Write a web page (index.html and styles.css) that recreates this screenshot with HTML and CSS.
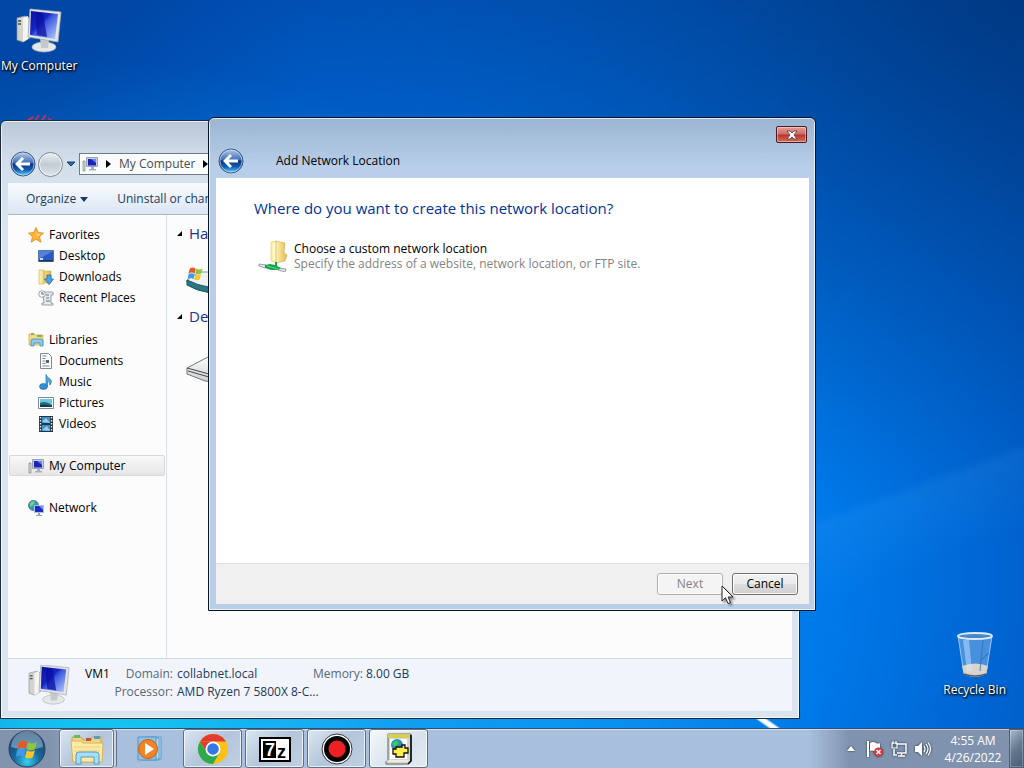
FILE: index.html
```html
<!DOCTYPE html>
<html lang="en">
<head>
    <meta charset="UTF-8">
    <meta name="viewport" content="width=device-width, initial-scale=1.0">
    <title>Add Network Location</title>
    <link rel="stylesheet" href="styles.css">
</head>
<body>
    <!-- Shared gradients and icons -->
    <svg class="defs" aria-hidden="true">
        <defs>
            <linearGradient id="screen" x1="0" y1="0" x2="1" y2="1">
                <stop offset="0" stop-color="#0a10a0"/>
                <stop offset=".4" stop-color="#1526c8"/>
                <stop offset=".5" stop-color="#3f5ce0"/>
                <stop offset="1" stop-color="#b9d0ff"/>
            </linearGradient>
            <linearGradient id="orb" x1="0" y1="0" x2="0" y2="1">
                <stop offset="0" stop-color="#b8cdea"/>
                <stop offset=".45" stop-color="#3f6fb8"/>
                <stop offset=".5" stop-color="#0d3180"/>
                <stop offset=".75" stop-color="#1260b8"/>
                <stop offset="1" stop-color="#5fe0ff"/>
            </linearGradient>
            <linearGradient id="folder" x1="0" y1="0" x2="1" y2="0">
                <stop offset="0" stop-color="#fdf3b4"/>
                <stop offset="1" stop-color="#e0b94e"/>
            </linearGradient>
            <radialGradient id="startOrb" cx=".5" cy=".85" r=".8">
                <stop offset="0" stop-color="#38d0f0"/>
                <stop offset=".45" stop-color="#16699c"/>
                <stop offset="1" stop-color="#1c3f66"/>
            </radialGradient>
            <linearGradient id="drive" x1="0" y1="0" x2="0" y2="1">
                <stop offset="0" stop-color="#ffffff"/>
                <stop offset="1" stop-color="#c9cdcf"/>
            </linearGradient>
        </defs>
        <symbol id="computer" viewBox="0 0 48 44">
            <path d="M2 9 10 7l5 2v20l-7 4-6-2z" fill="#d3d3cf" stroke="#8d9294" stroke-width=".7"/>
            <path d="m8 9 5-2v23l-5 3z" fill="#f4f4f2"/>
            <path d="M3 12h3M3 15h3" stroke="#4b4f52" stroke-width="1.300"/>
            <ellipse cx="29" cy="38" rx="12" ry="5" fill="#e6e8e8" stroke="#aab0b2" stroke-width=".7"/>
            <path d="m25 29 9 2-1 8h-7z" fill="#c4c9cc"/>
            <path d="m15 0 31 3-3 30-30-5z" fill="#e3e5e2" stroke="#a2a9ac" stroke-width=".8"/>
            <path d="m16 2 27 3-3 25-25-4z" fill="url(#screen)"/>
            <path d="m20 3 8 1 4 24-10-2z" fill="#0a0d9c" opacity=".7"/>
        </symbol>
        <symbol id="computer-small" viewBox="0 0 16 16">
            <path d="M1 5h2v10H1z" fill="#d8ddcf" stroke="#7e8679" stroke-width=".7"/>
            <path d="M4.500 1.500h11v9h-11z" fill="#c7cede" stroke="#97a1b8"/>
            <path d="M6 3h8v6.500H6z" fill="#1a22b8"/>
            <path d="M9 3h5v4z" fill="#6a83ee"/>
            <path d="M9 11h3v2h2v1.500H7V13h2z" fill="#a9b1bd"/>
        </symbol>
        <symbol id="back" viewBox="0 0 26 26">
            <circle cx="13" cy="13" r="12" fill="url(#orb)" stroke="#3d5274"/>
            <circle cx="13" cy="13" r="11" fill="none" stroke="#cfe2f6" stroke-width=".8" opacity=".8"/>
            <path d="m5 13 7-7 2 2-3.500 3.500H20v3h-9.500L14 18l-2 2z" fill="#fff"/>
        </symbol>
        <symbol id="winflag" viewBox="0 0 24 24">
            <path d="M4 5q4-3 8 0l-1 7q-4-3-9 0z" fill="#e8572a"/>
            <path d="M13 5q4 3 9 0l-2 7q-4 3-8 0z" fill="#8fc63d"/>
            <path d="M2 13q4-3 9 0l-2 7q-4-3-8 0z" fill="#3f9be8"/>
            <path d="M12 13q4 3 8 0l-2 7q-4 3-8 0z" fill="#fbc52c"/>
        </symbol>
    </svg>

    <div class="screen">
        <main class="desktop">
            <a class="shortcut shortcut-computer" href="#">
                <svg class="shortcut-icon"><use href="#computer"/></svg>
                <span>My Computer</span>
            </a>

            <svg class="hidden-shortcut" viewBox="0 0 32 12" aria-hidden="true">
                <path d="m4 7 6-3M11 8l4-6M17 8l5-6M24 5l4 3" stroke="#a83a64" stroke-width="2"/>
            </svg>

            <a class="shortcut shortcut-bin" href="#">
                <svg class="shortcut-icon" viewBox="0 0 48 48">
                    <path d="m7 5 6 38q11 5 22 0l6-38z" fill="#7fb2e8" fill-opacity=".55" stroke="#b9d6f2" stroke-opacity=".8"/>
                    <path d="m11 35 2 8q11 5 22 0l2-8q-12-5-26 0z" fill="#d9d5cd"/>
                    <path d="M12 9h6l3 31h-5z" fill="#d7ecff" opacity=".45"/>
                    <path d="m32 9-3 31M38 22l-9 8" stroke="#346fb0" stroke-width="1.200" opacity=".7"/>
                    <path d="M13 43q11 4 22 0" fill="none" stroke="#5a5d66" stroke-width="1.500"/>
                    <ellipse cx="24" cy="5" rx="17" ry="3" fill="#4a86c8" stroke="#dcecf6" stroke-width="1.800"/>
                </svg>
                <span>Recycle Bin</span>
            </a>

            <section class="window explorer">
                <div class="explorer-title"></div>
                <nav class="explorer-nav">
                    <button class="round-btn" aria-label="Back"><svg><use href="#back"/></svg></button>
                    <button class="round-btn forward" aria-label="Forward"></button>
                    <button class="history-btn" aria-label="Recent pages">
                        <svg viewBox="0 0 10 6"><path d="M1 1h8L5 5z" fill="#2c6fb5" stroke="#1d3f6b"/></svg>
                    </button>
                    <div class="address">
                        <svg class="icon16"><use href="#computer-small"/></svg>
                        <svg class="crumb-arrow" viewBox="0 0 5 8"><path d="m0 0 5 4-5 4z"/></svg>
                        <a href="#">My Computer</a>
                        <svg class="crumb-arrow" viewBox="0 0 5 8"><path d="m0 0 5 4-5 4z"/></svg>
                    </div>
                </nav>
                <div class="toolbar">
                    <button>Organize <svg viewBox="0 0 8 5"><path d="M0 0h8L4 5z"/></svg></button>
                    <button>Uninstall or change</button>
                </div>

                <div class="explorer-body">
                    <aside class="sidebar">
                        <ul class="tree">
                            <li><a href="#">
                                <svg class="icon16" viewBox="0 0 16 16"><path d="m8 .5 2.300 5 5.200.6-3.900 3.600 1.200 5.500L8 12.300l-4.800 2.900 1.200-5.500L.5 6.100l5.200-.6z" fill="#fbb43a" stroke="#e38a1c" stroke-width=".8"/><path d="m8 3 1 4 4 0-4 2z" fill="#ffe48a"/></svg>
                                Favorites</a></li>
                            <li class="child"><a href="#">
                                <svg class="icon16" viewBox="0 0 16 16"><path d="M.5 2.500h15v11H.5z" fill="#2b58c0" stroke="#56779f"/><path d="M1 3h14L1 11z" fill="#6f9df0" opacity=".6"/><path d="M1 12h14v1.500H1z" fill="#1d3568"/><path d="M2 10h3v2H2z" fill="#c9dcf5"/></svg>
                                Desktop</a></li>
                            <li class="child"><a href="#">
                                <svg class="icon16" viewBox="0 0 16 16"><path d="M1 1h5v14H1zM6 2h7v12H6z" fill="url(#folder)" stroke="#d3ac4c" stroke-width=".6"/><path d="M9 6h4v4h2.500L11 15.500 6.500 10H9z" fill="#4ba4e6" stroke="#1e66a8" stroke-width=".8"/></svg>
                                Downloads</a></li>
                            <li class="child"><a href="#">
                                <svg class="icon16" viewBox="0 0 16 16"><path d="M5 2h9q2 0 1 3h-2v8q3 0 2 2H5q-2 0-1-2h2z" fill="#e7ebed" stroke="#7f898f" stroke-width=".8"/><circle cx="4" cy="4" r="3.300" fill="#f5f8fa" stroke="#8a949a" stroke-width=".8"/><path d="M4 2v2h2M8 5h3M8 8h3M8 11h4" fill="none" stroke="#6b757b" stroke-width="1.200"/></svg>
                                Recent Places</a></li>
                        </ul>
                        <ul class="tree">
                            <li><a href="#">
                                <svg class="icon16" viewBox="0 0 16 16"><path d="M1 2h5l1 1h8v10H1z" fill="#f5dc82" stroke="#cfae52" stroke-width=".8"/><path d="M3 2h3M9 4h5" stroke="#5ca45c" stroke-width="1.500"/><path d="M3 14V9q0-2 2-2h8q2 0 2 2v5h-3v-3H6v3z" fill="#8ccbee" stroke="#4390bd" stroke-width=".8"/></svg>
                                Libraries</a></li>
                            <li class="child"><a href="#">
                                <svg class="icon16" viewBox="0 0 16 16"><path d="M2.500.5h8l3 3v12h-11z" fill="#fbfcfd" stroke="#818a91"/><path d="M4.500 3h4M4.500 5.500h3M4.500 8h3M4.500 10.500h3M4.500 13h7" stroke="#7e8790"/><path d="M8 7h3v3H8z" fill="#59636e"/></svg>
                                Documents</a></li>
                            <li class="child"><a href="#">
                                <svg class="icon16" viewBox="0 0 16 16"><ellipse cx="5.500" cy="12.500" rx="4" ry="3" fill="#2f93d8" stroke="#1c639d" stroke-width=".6"/><path d="M8 12V.500q1 3 4 4.500 3 2 0 6 0-3-2.500-4v5z" fill="#4badea" stroke="#1c639d" stroke-width=".6"/></svg>
                                Music</a></li>
                            <li class="child"><a href="#">
                                <svg class="icon16" viewBox="0 0 16 16"><path d="M.5 2.500h15v11H.5z" fill="#fff" stroke="#7d8b94"/><path d="M2 4h12v8H2z" fill="#6ec3e8"/><path d="M2 8q5-3 12 2v2H2z" fill="#226f6e"/><path d="M2 10q6-1 12 1v1H2z" fill="#12395c"/></svg>
                                Pictures</a></li>
                            <li class="child"><a href="#">
                                <svg class="icon16" viewBox="0 0 16 16"><path d="M1 0h14v16H1z" fill="#27333d"/><path d="M4 1h8v6H4zM4 9h8v6H4z" fill="#3f92cf"/><path d="m4 6 4-4 4 5zM4 14l5-4 3 5z" fill="#8fd0ee"/><path d="M2.500 1v14M13.500 1v14" stroke="#e6eef3" stroke-width="1.400" stroke-dasharray="1.500 1.500"/></svg>
                                Videos</a></li>
                        </ul>
                        <ul class="tree">
                            <li class="selected"><a href="#"><svg class="icon16"><use href="#computer-small"/></svg>My Computer</a></li>
                        </ul>
                        <ul class="tree">
                            <li><a href="#">
                                <svg class="icon16" viewBox="0 0 16 16"><circle cx="5.500" cy="5.500" r="5" fill="#2e9bd0" stroke="#24659a" stroke-width=".7"/><path d="M2 3q3-3 5-1L5 5 2 7zM6 7l3-1-1 4z" fill="#7fd06a"/><path d="M6.500 5.500h9v7h-9z" fill="#1c2cc0" stroke="#b6c0d4"/><path d="m11 6 4 0v4z" fill="#7b90f0"/><path d="M10 13h2v2h2v1H8v-1h2z" fill="#99a3b2"/></svg>
                                Network</a></li>
                        </ul>
                    </aside>
                    <div class="files">
                        <h2><svg viewBox="0 0 7 7"><path d="M6 1v5H1z"/></svg>Hard Disk Drives</h2>
                        <div class="drive">
                            <svg viewBox="0 0 48 36">
                                <path d="m1 19 12-8h28l6 8v7q-22 8-46-4z" fill="#eef2f2" stroke="#8b9799"/>
                                <path d="M1 19q22 11 46 7v4q-26 6-46-6z" fill="#2c7583" stroke="#1c5560"/>
                                <svg x="1" y="4" width="17" height="17"><use href="#winflag"/></svg>
                            </svg>
                        </div>
                        <h2><svg viewBox="0 0 7 7"><path d="M6 1v5H1z"/></svg>Devices with Removable Storage</h2>
                        <div class="drive">
                            <svg viewBox="0 0 48 36">
                                <path d="m1 17 21-11h20l5 9v12q-14 6-28 3L1 23z" fill="url(#drive)" stroke="#74797b"/>
                                <path d="m1 17 22 6 24-5M2 20l21 6 24-5" fill="none" stroke="#4c5254" stroke-width="1.200"/>
                            </svg>
                        </div>
                    </div>
                </div>

                <footer class="details">
                    <svg class="details-icon"><use href="#computer"/></svg>
                    <strong>VM1</strong>
                    <dl>
                        <dt>Domain:</dt><dd>collabnet.local</dd>
                        <dt>Processor:</dt><dd>AMD Ryzen 7 5800X 8-C...</dd>
                    </dl>
                    <dl>
                        <dt>Memory:</dt><dd>8.00 GB</dd>
                    </dl>
                </footer>
            </section>

            <section class="window dialog" role="dialog" aria-labelledby="dialog-title">
                <header class="dialog-caption">
                    <button class="close-btn" aria-label="Close">
                        <svg viewBox="0 0 12 10"><path d="M1 1h3l2 2 2-2h3L8 5l3 4H8L6 7 4 9H1l3-4z" fill="#fff" stroke="#5c3238" stroke-width=".8"/></svg>
                    </button>
                </header>
                <div class="dialog-title">
                    <button class="round-btn" aria-label="Back"><svg><use href="#back"/></svg></button>
                    <span id="dialog-title">Add Network Location</span>
                </div>
                <div class="dialog-content">
                    <h1>Where do you want to create this network location?</h1>
                    <a class="choice" href="#">
                        <svg viewBox="0 0 32 32">
                            <path d="m13 2 6-1v22l-6-2z" fill="#fff1a6" stroke="#e2c462" stroke-width=".6"/>
                            <path d="m18 1 9 2-1 10 3 2-2 6-9 2z" fill="url(#folder)" stroke="#d1ab4b" stroke-width=".6"/>
                            <path d="m15 4 2-1v17l-2-1z" fill="#fffbd8"/>
                            <path d="m1 24 7 1-1 3-6-2zM20 28l8 1-1 3-7-2z" fill="#dfe5e8" stroke="#859195" stroke-width=".8"/>
                            <path d="m7 25 5-1 5 1v-3h2v4l4 2-3 2h-7l-6-2z" fill="#16a34a"/>
                            <path d="m9 26 11 3" stroke="#5fd486" stroke-width="1.200"/>
                        </svg>
                        <span class="choice-text">
                            <span>Choose a custom network location</span>
                            <small>Specify the address of a website, network location, or FTP site.</small>
                        </span>
                    </a>
                </div>
                <footer class="dialog-footer">
                    <button class="btn" disabled>Next</button>
                    <button class="btn">Cancel</button>
                    <svg class="cursor" viewBox="0 0 13 20"><path d="M1 1v15l3.500-3.300L7 18.500l2.500-1-2.400-5.500H12z" fill="#fff" stroke="#222"/></svg>
                </footer>
            </section>
        </main>

        <footer class="taskbar">
            <button class="start" aria-label="Start">
                <svg viewBox="0 0 38 38">
                    <circle cx="19" cy="19" r="18" fill="url(#startOrb)" stroke="#273f5c"/>
                    <path d="M3 17a16 16 0 0 1 32 0q-16 5-32 0z" fill="#d8eaf8" opacity=".4"/>
                    <svg x="7" y="7" width="24" height="24"><use href="#winflag"/></svg>
                </svg>
            </button>
            <button class="task stacked" aria-label="Windows Explorer">
                <svg viewBox="0 0 34 34">
                    <path d="M2 5h9l2 3h8l1-3h9v25H3z" fill="#f2d77e" stroke="#c9a551"/>
                    <path d="M4 3h6v3H4z" fill="#6cb66c"/><path d="M16 6h5v3h-5z" fill="#c9543d"/><path d="M24 4h6v3h-6z" fill="#5a9cc9"/>
                    <path d="M1 9h10l2 2h20l-1 19H3z" fill="#fbe9a4" stroke="#d6b461"/>
                    <path d="M4 15h26M4 19h26" stroke="#ecd27c"/>
                    <path d="M6 32v-9q0-3 3-3h17q3 0 3 3v9h-5v-7H11v7z" fill="#a9dcf2" stroke="#4d9fc7"/>
                </svg>
            </button>
            <button class="task idle" aria-label="Windows Media Player">
                <svg viewBox="0 0 34 34">
                    <path d="M13 5h16v22H13zM10 6h17v22H10z" fill="#b6dbf2" stroke="#5a9dc9"/>
                    <path d="M6 5h18v23H6z" fill="#8cc2e7" stroke="#5795c3"/>
                    <circle cx="16" cy="17" r="9.500" fill="#f08427" stroke="#d05d14"/>
                    <path d="m13 11 9 6-9 6z" fill="#fff"/>
                </svg>
            </button>
            <button class="task" aria-label="Google Chrome">
                <svg viewBox="0 0 34 34">
                    <circle cx="17" cy="17" r="15" fill="#fbc116"/>
                    <path d="M4 9.500A15 15 0 0 1 30 9.500H17z" fill="#e33b2e"/>
                    <path d="M4 9.500 17 9.500 11 21z" fill="#e33b2e"/>
                    <path d="M4 9.500A15 15 0 0 0 17 32l6.500-11.300-12.500.300z" fill="#2da94f"/>
                    <circle cx="17" cy="17" r="7.500" fill="#fff"/>
                    <circle cx="17" cy="17" r="5.800" fill="#3478e5"/>
                </svg>
            </button>
            <button class="task" aria-label="7-Zip">
                <svg viewBox="0 0 34 34">
                    <path d="M2 6h30v23H2z" fill="#fff" stroke="#000" stroke-width="2"/>
                    <path d="M5 9h13v17H5z"/>
                    <text class="zip-text" x="7" y="24" fill="#fff">7</text>
                    <text class="zip-text" x="19" y="26">z</text>
                </svg>
            </button>
            <button class="task" aria-label="Screen recorder">
                <svg viewBox="0 0 34 34">
                    <circle cx="17" cy="17" r="15" fill="#fff" stroke="#333"/>
                    <circle cx="17" cy="17" r="13"/>
                    <circle cx="17" cy="17" r="8.500" fill="#ee2024"/>
                </svg>
            </button>
            <button class="task active" aria-label="Setup">
                <svg viewBox="0 0 34 34">
                    <path d="M6 2h23v27l-3 3H4v-3h2z" fill="#d6d6ce" stroke="#67675f"/>
                    <path d="M29 3v26l-3 3" fill="none" stroke="#000" stroke-width="1.500"/>
                    <path d="M6 2h22v4H6z" fill="#d4cf5c"/>
                    <path d="M8 7h17v20H8z" fill="#fff"/>
                    <circle cx="15" cy="13" r="6" fill="#278fb0"/>
                    <path d="m10 12 4-4 3 3-4 4z" fill="#42c660"/>
                    <path d="M11 17h3v-2h6v-2h3v3h3v5h-4v4h-8v-3h-3z" fill="#fff04e" stroke="#111" stroke-width="1.300"/>
                    <path d="M4 29h22" stroke="#fff"/>
                </svg>
            </button>

            <div class="tray">
                <svg class="tray-arrow" viewBox="0 0 8 5"><path d="M4 0 8 5H0z" fill="#fff"/></svg>
                <svg class="icon16" viewBox="0 0 16 16"><path d="M1 0v16" stroke="#fff" stroke-width="2"/><path d="M3 2q3-2 6 0 2 1 4 0v8q-3 2-6 0-2-1-4 0z" fill="#fff"/><circle cx="11.500" cy="11" r="4.500" fill="#dd3838"/><path d="m9.500 9 4 4m0-4-4 4" stroke="#fff" stroke-width="1.500"/></svg>
                <svg class="icon16" viewBox="0 0 16 16"><path d="M5 3h10v9H6M7 15h7M10.500 12v3M3 8v6h3" fill="none" stroke="#fff" stroke-width="1.500"/><path d="M1 2h5v5H1zM2 0v3M5 0v3" fill="#586e8c" stroke="#fff" stroke-width="1.200"/></svg>
                <svg class="icon16" viewBox="0 0 16 16"><path d="M0 5h3l4-4v14l-4-4H0z" fill="#fff"/><path d="M9 5q2 3 0 6M11 3q4 5 0 10M13 1.500q5 6.500 0 13" fill="none" stroke="#fff" stroke-width="1.200"/></svg>
                <time class="clock" datetime="2022-04-26T04:55"><span>4:55 AM</span><span>4/26/2022</span></time>
            </div>
            <button class="show-desktop" aria-label="Show desktop"></button>
        </footer>
    </div>
</body>
</html>
```
FILE: styles.css
```css
* {
    box-sizing: border-box;
}
body {
    margin: 0;
    font-family: "Open Sans", "Noto Sans", sans-serif;
    font-size: 12px;
    line-height: 16px;
    color: #000;
}
a {
    color: inherit;
    text-decoration: none;
}
button {
    padding: 0;
    border: none;
    background: none;
    color: inherit;
    font: inherit;
}
svg {
    display: block;
    flex: none;
}
ul, dl, dd, h1, h2 {
    margin: 0;
    padding: 0;
    font-weight: normal;
}
.defs {
    position: absolute;
    width: 0;
    height: 0;
}
.icon16 {
    width: 16px;
    height: 16px;
}
.screen {
    display: flex;
    flex-direction: column;
    height: 100vh;
    overflow: hidden;
}

/* Desktop */
.desktop {
    position: relative;
    flex: 1;
    background:
        radial-gradient(ellipse at 100% 0, rgba(0, 45, 100, .5), transparent 50%),
        linear-gradient(160deg, transparent 74%, rgba(90, 190, 255, .1) 75%, transparent 82%),
        radial-gradient(circle at 10% 108%, #16d0f5 0, rgba(22, 180, 245, .6) 25%, transparent 60%),
        radial-gradient(ellipse at 55% 80%, #0a8af5 0, #0078e8 35%, #0060cc 60%, #0047a6 88%);
}
.desktop::after {
    content: "";
    position: absolute;
    right: 244px;
    bottom: 0;
    width: 26px;
    height: 9px;
    background: linear-gradient(35deg, transparent 35%, #fff 45%, #fff 60%, transparent 70%);
}
.shortcut {
    position: absolute;
    display: flex;
    flex-direction: column;
    align-items: center;
    gap: 3px;
    color: #fff;
    text-shadow: 1px 1px 2px #000, 0 1px 3px #000;
}
.shortcut-icon {
    width: 48px;
    height: 48px;
}
.shortcut-computer {
    top: 7px;
    left: 1px;
}
.shortcut-bin {
    right: 18px;
    bottom: 30px;
}
.hidden-shortcut {
    position: absolute;
    top: 113px;
    left: 24px;
    width: 32px;
    height: 12px;
}

/* Windows */
.window {
    position: absolute;
    display: flex;
    flex-direction: column;
    border: 1px solid #1c2a3c;
    border-radius: 6px 6px 0 0;
    box-shadow: inset 0 0 0 1px rgba(255, 255, 255, .7);
}
.round-btn {
    width: 26px;
    height: 26px;
}
.round-btn svg {
    width: 26px;
    height: 26px;
}
.explorer {
    inset: 120px 224px 9px 0;
    padding: 0 7px 7px;
    background: linear-gradient(#b9c8d8 0, #d3dfea 40px, #d9e4ef 100px, #d9e4ef);
}
.explorer-title {
    height: 26px;
}
.explorer-nav {
    display: flex;
    align-items: center;
    height: 36px;
    gap: 2px;
    padding: 0 0 2px 2px;
}
.explorer-nav .forward {
    width: 25px;
    height: 25px;
    border: 1px solid #7e8790;
    border-radius: 50%;
    background: linear-gradient(#e9eef2, #c3ccd4 50%, #dde5eb);
    box-shadow: inset 0 0 0 1px #f4f7f9;
}
.history-btn {
    padding: 0 1px;
}
.history-btn svg {
    width: 10px;
    height: 6px;
}
.address {
    display: flex;
    flex: 1;
    align-items: center;
    gap: 8px;
    height: 22px;
    padding: 0 2px;
    border: 1px solid #6f7a87;
    background: #f9fbfd;
    color: #4c4c4c;
}
.crumb-arrow {
    width: 5px;
    height: 8px;
}
.toolbar {
    display: flex;
    align-items: center;
    gap: 29px;
    height: 32px;
    padding: 0 18px;
    border-top: 1px solid #f5f9fd;
    border-bottom: 1px solid #a8b7ca;
    background: linear-gradient(#f8fbfe, #e8f0f9 50%, #dbe6f3);
    color: #1e395b;
}
.toolbar button {
    display: flex;
    align-items: center;
    gap: 4px;
}
.toolbar svg {
    width: 8px;
    height: 5px;
    fill: #1e395b;
}
.explorer-body {
    display: flex;
    flex: 1;
    min-height: 0;
    background: #fcfcfc;
}
.sidebar {
    display: flex;
    flex-direction: column;
    gap: 21px;
    width: 159px;
    padding: 9px 1px;
    border-right: 1px solid #d9e3f0;
}
.tree {
    list-style: none;
}
.tree a {
    display: flex;
    align-items: center;
    gap: 5px;
    height: 21px;
    padding-left: 19px;
}
.tree .child a {
    padding-left: 29px;
}
.tree .selected a {
    padding-left: 18px;
    border: 1px solid #d9d9d9;
    border-radius: 2px;
    background: linear-gradient(#f8f8f8, #e6e6e6);
}
.files {
    flex: 1;
    min-width: 0;
    padding: 8px 9px;
}
.files h2 {
    display: flex;
    align-items: center;
    gap: 6px;
    font-size: 15px;
    line-height: 20px;
    color: #1e3287;
}
.files h2 svg {
    width: 7px;
    height: 7px;
}
.drive {
    height: 63px;
    padding: 18px 10px;
}
.drive > svg {
    width: 48px;
    height: 36px;
}
.files h2 ~ h2 + .drive {
    padding-top: 25px;
}
.details {
    display: flex;
    height: 53px;
    padding: 6px 18px;
    border-top: 1px solid #ccd9ea;
    background: #f1f5fb;
}
.details-icon {
    width: 46px;
    height: 40px;
    margin-right: 13px;
}
.details strong {
    width: 28px;
    font-weight: normal;
    line-height: 18px;
}
.details dl {
    display: grid;
    grid-template-columns: 60px 136px;
    gap: 0 4px;
    align-content: start;
    line-height: 18px;
    white-space: nowrap;
    color: #1e395b;
}
.details dt {
    text-align: right;
    color: #5a6779;
}
.details dl + dl {
    grid-template-columns: 49px 100px;
}

/* Wizard dialog */
.dialog {
    inset: 117px 208px 117px 208px;
    padding: 0 6px 6px 7px;
    border-color: #0a1420;
    background: linear-gradient(#9ab5d1 0, #b9cfe9 50px, #b9cfe9);
}
.dialog-caption {
    display: flex;
    justify-content: flex-end;
    height: 26px;
    padding: 8px 2px 0;
}
.close-btn {
    display: flex;
    align-items: center;
    justify-content: center;
    width: 31px;
    height: 17px;
    border: 1px solid #4a1c22;
    border-radius: 2px;
    background: linear-gradient(#e3a09a, #cf6a60 48%, #b5372b 52%, #d2705c);
    box-shadow: inset 0 0 0 1px rgba(255, 255, 255, .4);
}
.close-btn svg {
    width: 12px;
    height: 10px;
}
.dialog-title {
    display: flex;
    align-items: center;
    gap: 32px;
    height: 34px;
    padding: 0 2px;
}
.dialog-content {
    flex: 1;
    padding: 20px 38px;
    background: #fff;
}
.dialog-content h1 {
    font-size: 15px;
    line-height: 20px;
    color: #003399;
}
.choice {
    display: flex;
    gap: 4px;
    margin-top: 22px;
    padding-left: 4px;
}
.choice svg {
    width: 32px;
    height: 32px;
}
.choice-text {
    display: flex;
    flex-direction: column;
    line-height: 15px;
    padding-top: 1px;
}
.choice small {
    font-size: 12px;
    color: #838383;
}
.dialog-footer {
    position: relative;
    display: flex;
    justify-content: flex-end;
    gap: 9px;
    height: 41px;
    padding: 9px 11px;
    border-top: 1px solid #dfdfdf;
    background: #f0f0f0;
}
.btn {
    width: 66px;
    height: 22px;
    border: 1px solid #707070;
    border-radius: 3px;
    background: linear-gradient(#f2f2f2, #ebebeb 48%, #dddddd 52%, #cfcfcf);
    box-shadow: inset 0 0 0 1px #fbfbfb;
}
.btn:disabled {
    border-color: #adb2b5;
    background: #f4f4f4;
    color: #838383;
}
.cursor {
    position: absolute;
    right: 75px;
    top: 21px;
    width: 13px;
    height: 20px;
    filter: drop-shadow(2px 2px 1px rgba(0, 0, 0, .4));
}

/* Taskbar */
.taskbar {
    display: flex;
    height: 40px;
    border-top: 1px solid #35506e;
    background: linear-gradient(90deg, #8293ad 0, #8293ad 50px, #a8c0dd 120px, #a8c0dd 79%, #7f93af 83%, #8092ad);
    box-shadow: inset 0 1px 0 rgba(255, 255, 255, .5);
}
.start {
    width: 54px;
    padding-left: 8px;
}
.start > svg {
    width: 38px;
    height: 38px;
}
.task {
    display: flex;
    align-items: center;
    justify-content: center;
    width: 59px;
    margin-right: 3px;
    border: 1px solid #5d6f88;
    border-radius: 3px;
    background: linear-gradient(135deg, #dbe6f1, #b3c5db 50%, #c0d0e2);
    box-shadow: inset 0 0 0 1px rgba(255, 255, 255, .7);
}
.task svg {
    width: 34px;
    height: 34px;
}
.stacked {
    width: 55px;
    margin: 0 3px 0 5px;
    box-shadow: inset 0 0 0 1px rgba(255, 255, 255, .7), 3px 0 0 -1px #c6d4e4, 4px 0 0 -1px #5d6f88;
}
.idle {
    border-color: transparent;
    background: none;
    box-shadow: none;
    width: 63px;
}
.active {
    background: linear-gradient(135deg, #f4f8f8, #d6e2ec 60%, #e3ecee);
}
.zip-text {
    font: bold 18px "Liberation Sans", sans-serif;
}
.tray {
    display: flex;
    align-items: center;
    gap: 8px;
    margin-left: auto;
    color: #fff;
}
.tray-arrow {
    width: 8px;
    height: 5px;
    margin-right: 4px;
}
.tray svg {
    filter: drop-shadow(0 0 1px #1d2d42);
}
.clock {
    display: flex;
    flex-direction: column;
    width: 68px;
    text-align: center;
    line-height: 17px;
}
.show-desktop {
    width: 15px;
    margin-left: 2px;
    border: 1px solid #4d6078;
    background: linear-gradient(135deg, #a9b9cc, #64788f 50%, #465a72);
    box-shadow: inset 0 0 0 1px rgba(255, 255, 255, .25);
}
```
